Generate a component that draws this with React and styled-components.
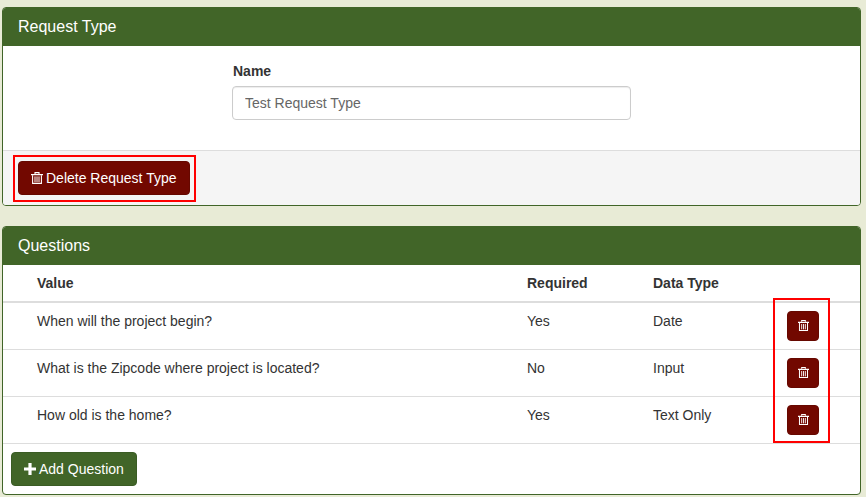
import React from "react";
import styled, { createGlobalStyle } from "styled-components";

const GlobalStyle = createGlobalStyle`
  html, body {
    margin: 0;
    background: #e8ebd6;
  }
  body {
    font-family: "Liberation Sans", Arial, sans-serif;
    font-size: 14px;
    line-height: 20px;
    color: #333;
  }
`;

const Page = styled.div`
  width: 859px;
  height: 497px;
  padding: 7px 0 0 2px;
  overflow: hidden;
`;

const Panel = styled.section`
  border: 1px solid #416528;
  border-radius: 4px;
  background: #fff;
  margin-bottom: 20px;
  overflow: hidden;
`;

const PanelHeading = styled.h3`
  margin: 0;
  height: 38px;
  padding: 0 15px;
  background: #416528;
  color: #fff;
  font-size: 16px;
  font-weight: 400;
  line-height: 37px;
`;

const FormBody = styled.div`
  height: 104px;
  box-sizing: border-box;
  padding: 15px 0 0 229px;
`;

const Label = styled.label`
  display: block;
  margin: 0 0 5px 1px;
  font-weight: 700;
`;

const TextInput = styled.input`
  display: block;
  width: 399px;
  height: 34px;
  box-sizing: border-box;
  padding: 6px 12px;
  border: 1px solid #ccc;
  border-radius: 4px;
  font: inherit;
  color: #666;
  box-shadow: inset 0 1px 1px rgba(0, 0, 0, 0.075);
`;

const PanelFooter = styled.div`
  height: 55px;
  box-sizing: border-box;
  padding: 4px 0 0 10px;
  background: #f5f5f5;
  border-top: 1px solid #ddd;
`;

const Highlight = styled.div`
  display: inline-flex;
  border: 2px solid #f00;
  padding: 4px 4px 5px 3px;
`;

const Button = styled.button`
  display: inline-flex;
  align-items: center;
  justify-content: center;
  gap: ${(p) => p.$gap || 0}px;
  height: ${(p) => p.$height || 34}px;
  width: ${(p) => (p.$width ? `${p.$width}px` : "auto")};
  padding: ${(p) => (p.$width ? 0 : "0 12px")};
  border: 1px solid ${(p) => (p.$danger ? "#660800" : "#3a5c24")};
  border-radius: 4px;
  background: ${(p) => (p.$danger ? "#720800" : "#416528")};
  color: #fff;
  font: inherit;
  white-space: nowrap;
`;

const Table = styled.div`
  position: relative;
`;

const Row = styled.div`
  display: grid;
  grid-template-columns: 524px 126px 134px 1fr;
  align-items: start;
  height: ${(p) => (p.$head ? 38 : 47)}px;
  box-sizing: border-box;
  border-bottom: ${(p) => (p.$head ? "2px solid #ddd" : "1px solid #ddd")};
  font-weight: ${(p) => (p.$head ? 700 : 400)};
  padding-top: 8px;
`;

const Cell = styled.div`
  padding-left: ${(p) => (p.$first ? 34 : 0)}px;
`;

const ActionCell = styled.div``;

const RedBox = styled.div`
  position: absolute;
  left: 770px;
  top: 33px;
  width: 53px;
  height: 141px;
  border: 2px solid #f00;
  pointer-events: none;
`;

const TableFooter = styled.div`
  padding: 8px 8px 0;
  height: 50px;
  box-sizing: border-box;
`;

const IconSvg = styled.svg`
  display: block;
  flex: none;
  margin-top: ${(p) => p.$lift || 0}px;
`;

const TrashIcon = ({ size = 12, lift }) => (
  <IconSvg width={size} height={size} viewBox="0 0 12 12" fill="none" $lift={lift} aria-hidden="true">
    <path d="M4 2V.6h4V2" stroke="#fff" strokeWidth="1.1" />
    <path d="M0 2.6h12" stroke="#fff" strokeWidth="1.2" />
    <path d="M1.6 3.2v8.2h8.8V3.2" stroke="#fff" strokeWidth="1.1" />
    <path d="M4 4.4v5.8M6 4.4v5.8M8 4.4v5.8" stroke="#fff" strokeWidth="1" />
  </IconSvg>
);

const PlusIcon = () => (
  <IconSvg width="12" height="12" viewBox="0 0 12 12" aria-hidden="true">
    <path d="M4.4 0h3.2v4.4H12v3.2H7.6V12H4.4V7.6H0V4.4h4.4z" fill="#fff" />
  </IconSvg>
);

const questions = [
  { value: "When will the project begin?", required: "Yes", type: "Date" },
  { value: "What is the Zipcode where project is located?", required: "No", type: "Input" },
  { value: "How old is the home?", required: "Yes", type: "Text Only" },
];

export default function App() {
  return (
    <Page>
      <GlobalStyle />
      <Panel>
        <PanelHeading>Request Type</PanelHeading>
        <FormBody>
          <Label htmlFor="name">Name</Label>
          <TextInput id="name" defaultValue="Test Request Type" />
        </FormBody>
        <PanelFooter>
          <Highlight>
            <Button $danger $gap={3}>
              <TrashIcon />
              Delete Request Type
            </Button>
          </Highlight>
        </PanelFooter>
      </Panel>

      <Panel>
        <PanelHeading>Questions</PanelHeading>
        <Table>
          <Row $head>
            <Cell $first>Value</Cell>
            <Cell>Required</Cell>
            <Cell>Data Type</Cell>
            <Cell />
          </Row>
          {questions.map((q) => (
            <Row key={q.value}>
              <Cell $first>{q.value}</Cell>
              <Cell>{q.required}</Cell>
              <Cell>{q.type}</Cell>
              <ActionCell>
                <Button $danger $width={32} $height={30} aria-label="Delete">
                  <TrashIcon size={11} lift={-1} />
                </Button>
              </ActionCell>
            </Row>
          ))}
          <RedBox />
        </Table>
        <TableFooter>
          <Button $gap={3}>
            <PlusIcon />
            Add Question
          </Button>
        </TableFooter>
      </Panel>
    </Page>
  );
}
